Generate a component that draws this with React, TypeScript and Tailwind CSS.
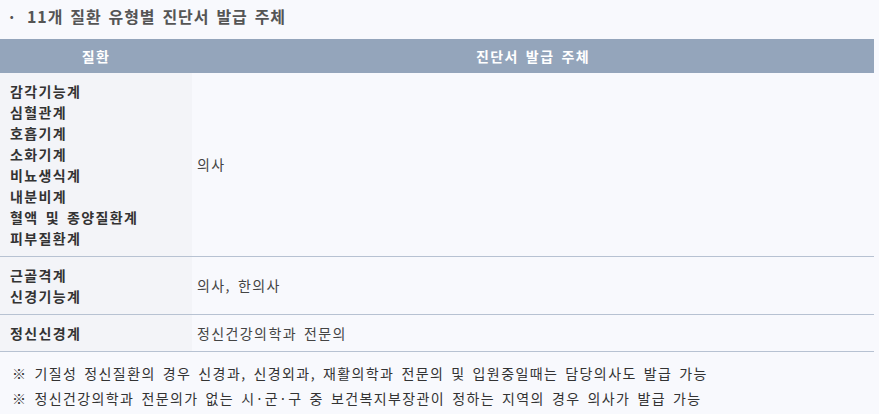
import React from 'react';

const rows = [
  {
    diseases: ['감각기능계', '심혈관계', '호흡기계', '소화기계', '비뇨생식계', '내분비계', '혈액 및 종양질환계', '피부질환계'],
    issuer: '의사',
  },
  { diseases: ['근골격계', '신경기능계'], issuer: '의사, 한의사' },
  { diseases: ['정신신경계'], issuer: '정신건강의학과 전문의' },
];

const notes = [
  '※ 기질성 정신질환의 경우 신경과, 신경외과, 재활의학과 전문의 및 입원중일때는 담당의사도 발급 가능',
  '※ 정신건강의학과 전문의가 없는 시·군·구 중 보건복지부장관이 정하는 지역의 경우 의사가 발급 가능',
];

export default function App() {
  return (
    <div
      className="w-[879px] h-[414px] bg-[#f8f9fd] text-[#333] overflow-hidden tracking-[1.4px] [word-spacing:2.5px]"
      style={{ fontFamily: '"Noto Sans CJK KR", "Noto Sans", sans-serif' }}
    >
      <div className="w-[874px]">
        <h3 className="flex items-center h-[39px] pb-[7px] text-[16px] font-bold text-[#555] tracking-[0.9px]">
          <span className="w-[27px] pl-[7px]">·</span>
          <span>11개 질환 유형별 진단서 발급 주체</span>
        </h3>

        <div className="grid grid-cols-[192px_1fr] bg-[#94a5bb] h-[34px] text-white text-[14px] font-bold">
          <div className="flex items-center justify-center">질환</div>
          <div className="flex items-center justify-center">진단서 발급 주체</div>
        </div>

        {rows.map((row) => (
          <div key={row.issuer} className="grid grid-cols-[192px_1fr] border-b border-[#b7c2d2] text-[14px] leading-[21px]">
            <div className="bg-[#f3f4f8] px-[10px] pt-[8px] pb-[7px] font-bold text-[#333]">
              {row.diseases.map((d) => (
                <div key={d}>{d}</div>
              ))}
            </div>
            <div className="flex items-center px-[5px] text-[#444]">{row.issuer}</div>
          </div>
        ))}

        <div className="pt-[9px] pl-[12px] text-[14px] leading-[25px] text-[#333]">
          {notes.map((n) => (
            <p key={n}>{n}</p>
          ))}
        </div>
      </div>
    </div>
  );
}
